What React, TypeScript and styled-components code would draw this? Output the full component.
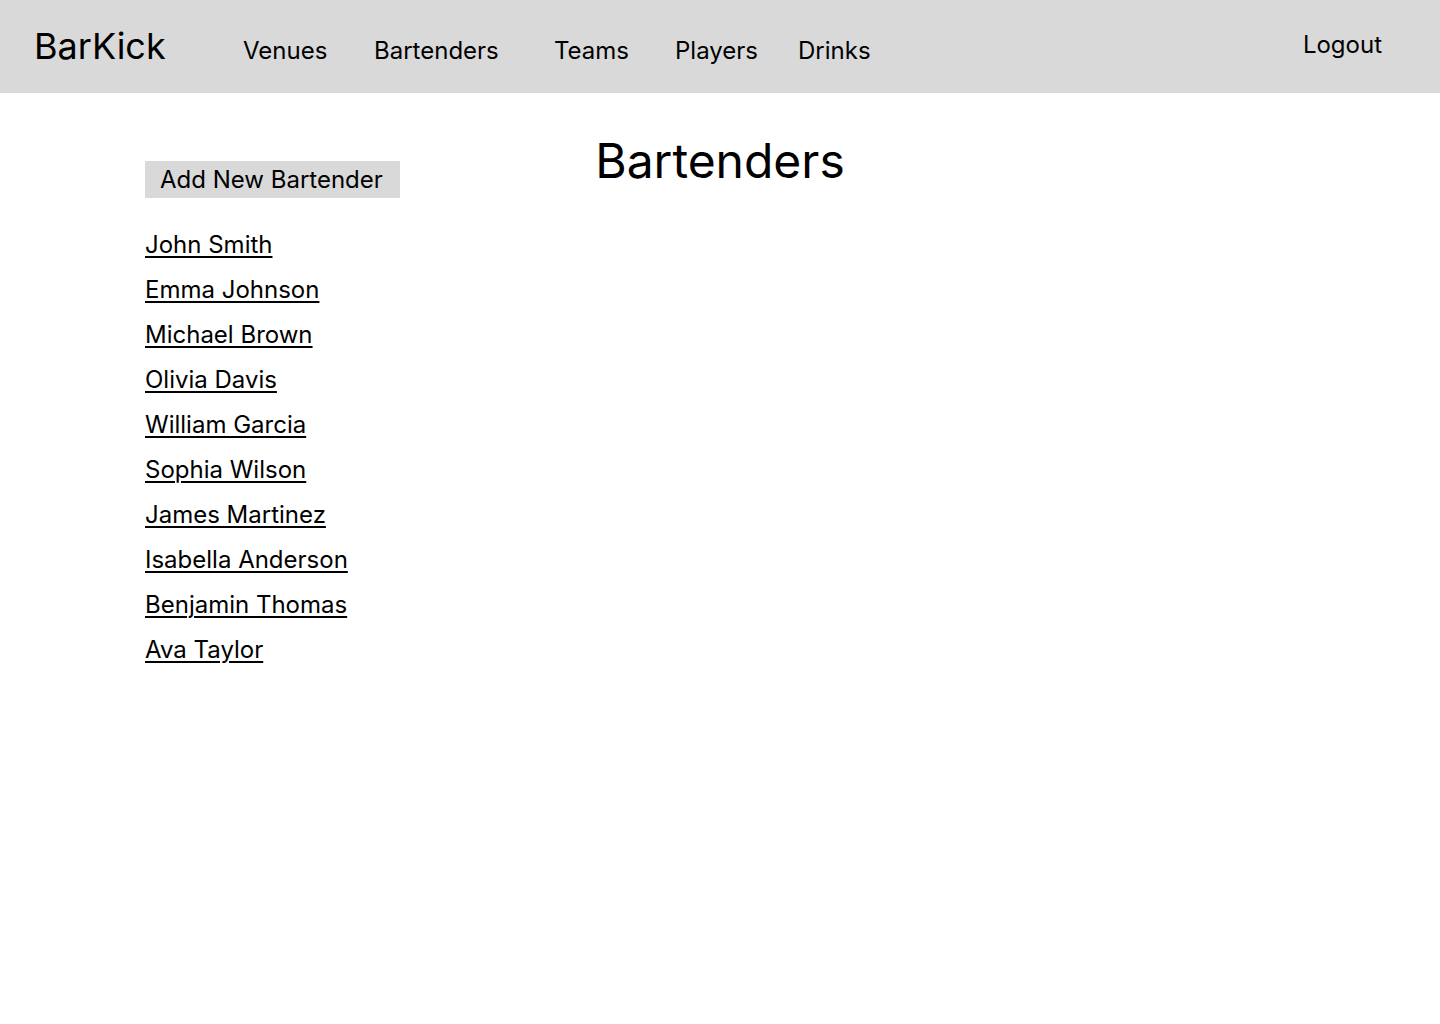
import React from "react";
import styled, { createGlobalStyle } from "styled-components";

const GlobalStyle = createGlobalStyle`
  html, body {
    margin: 0;
    padding: 0;
    background: #ffffff;
    font-family: Inter, "Noto Sans", Arial, sans-serif;
    color: #000000;
  }
  * { box-sizing: border-box; }
`;

const Header = styled.header`
  height: 93px;
  background: #d9d9d9;
  display: flex;
  align-items: flex-start;
  padding: 24px 58px 0 34px;
`;

const Brand = styled.div`
  width: 209px;
  font-size: 36px;
  line-height: normal;
  font-weight: 400;
`;

const Nav = styled.nav`
  display: grid;
  grid-template-columns: 131px 180px 121px 123px auto;
  margin-top: 12px;
`;

const NavLink = styled.a`
  font-size: 24px;
  line-height: normal;
  color: #000;
  text-decoration: none;
  cursor: pointer;
`;

const Logout = styled(NavLink)`
  margin-left: auto;
  margin-top: 6px;
`;

const Main = styled.main`
  display: grid;
  grid-template-columns: 1fr auto 1fr;
  padding-top: 38px;
`;

const Sidebar = styled.aside`
  padding-left: 145px;
  padding-top: 30px;
  display: flex;
  flex-direction: column;
  align-items: flex-start;
`;

const AddButton = styled.button`
  font-family: inherit;
  font-size: 24px;
  line-height: 29px;
  padding: 4px 17px 4px 15px;
  background: #d9d9d9;
  border: none;
  color: #000;
  cursor: pointer;
`;

const List = styled.ul`
  list-style: none;
  margin: 32px 0 0;
  padding: 0;
  display: flex;
  flex-direction: column;
  gap: 16px;
`;

const PersonLink = styled.a`
  font-size: 24px;
  line-height: 29px;
  color: #000;
  text-decoration: underline;
  text-decoration-thickness: 2px;
  text-underline-offset: 3px;
  cursor: pointer;
`;

const Title = styled.h1`
  margin: 0;
  font-size: 48px;
  font-weight: 400;
  line-height: normal;
`;

const navItems = ["Venues", "Bartenders", "Teams", "Players", "Drinks"];
const bartenders = [
  "John Smith",
  "Emma Johnson",
  "Michael Brown",
  "Olivia Davis",
  "William Garcia",
  "Sophia Wilson",
  "James Martinez",
  "Isabella Anderson",
  "Benjamin Thomas",
  "Ava Taylor",
];

export default function App() {
  return (
    <>
      <GlobalStyle />
      <Header>
        <Brand>BarKick</Brand>
        <Nav>
          {navItems.map((n) => (
            <NavLink key={n}>{n}</NavLink>
          ))}
        </Nav>
        <Logout>Logout</Logout>
      </Header>
      <Main>
        <Sidebar>
          <AddButton>Add New Bartender</AddButton>
          <List>
            {bartenders.map((b) => (
              <li key={b}>
                <PersonLink>{b}</PersonLink>
              </li>
            ))}
          </List>
        </Sidebar>
        <Title>Bartenders</Title>
        <div />
      </Main>
    </>
  );
}
